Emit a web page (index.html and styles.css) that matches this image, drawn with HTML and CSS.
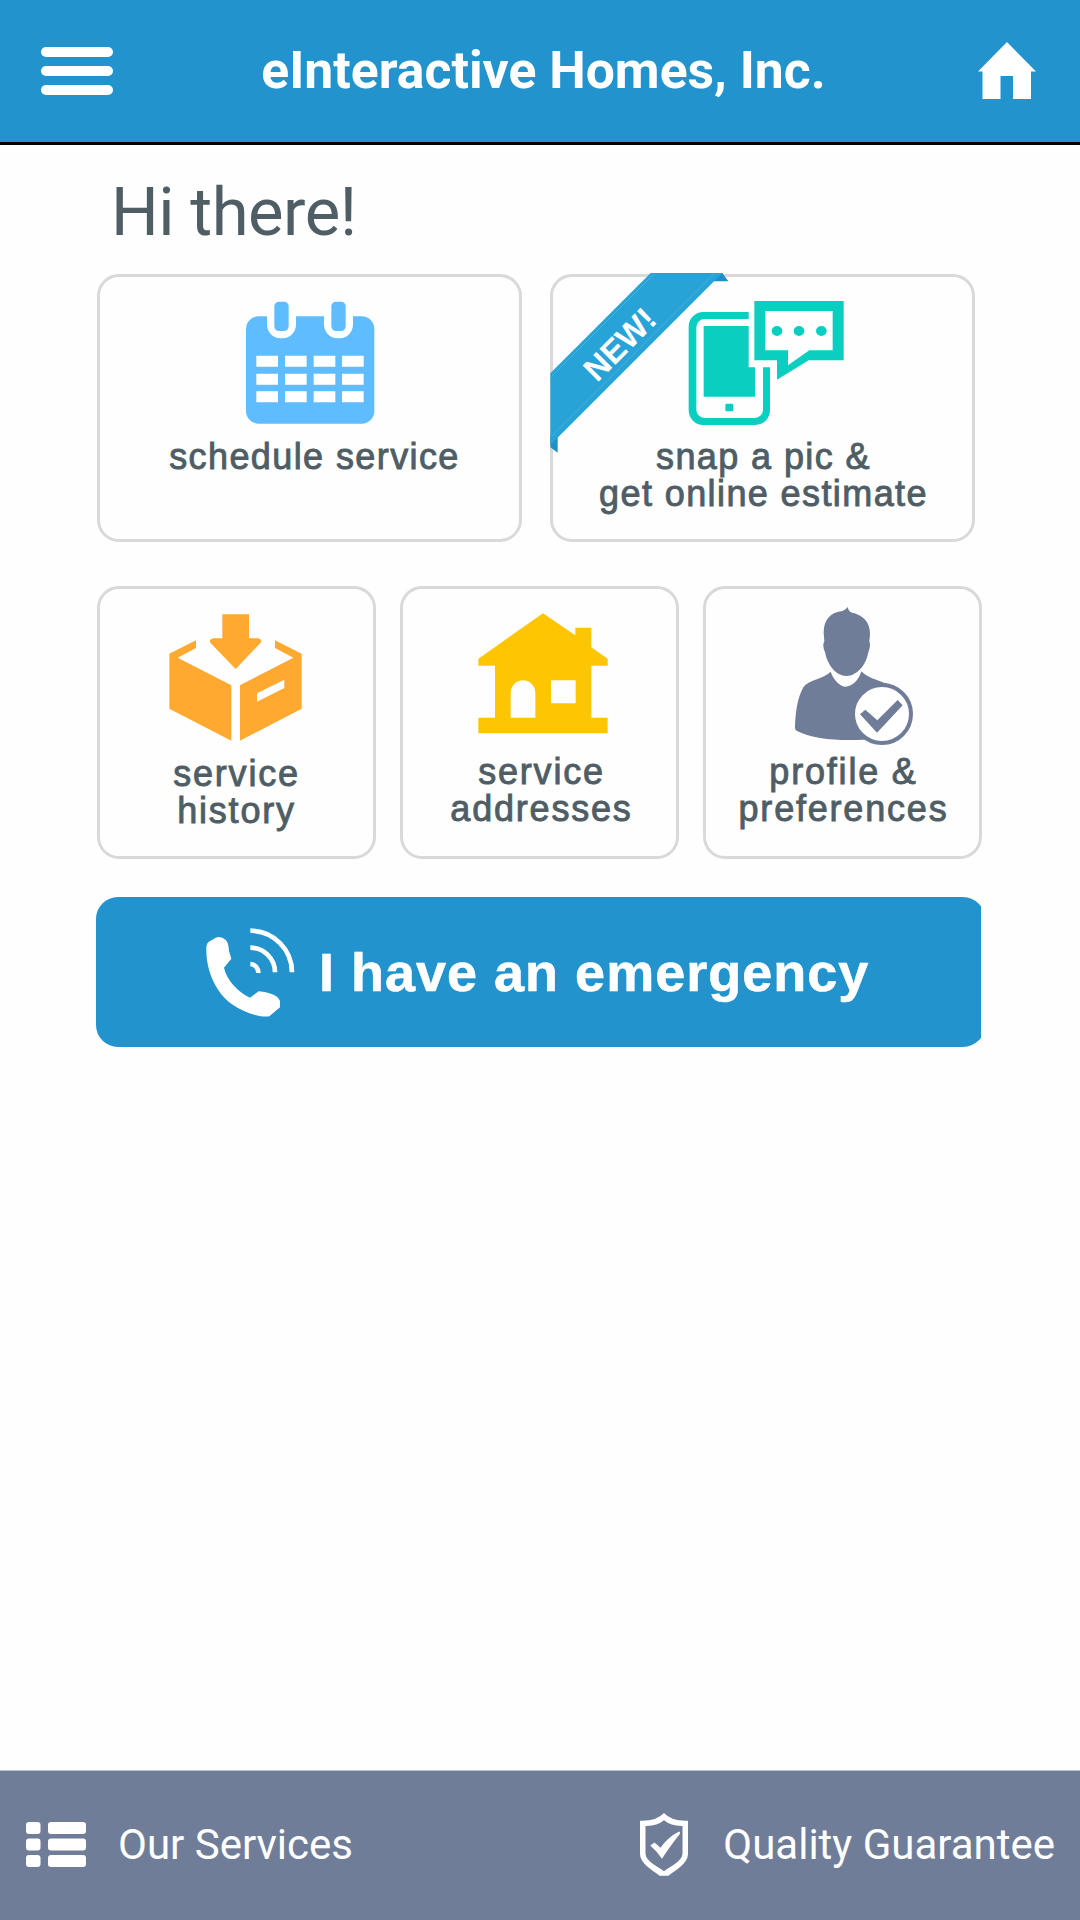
FILE: index.html
```html
<!DOCTYPE html>
<html lang="en">
<head>
    <meta charset="UTF-8" />
    <meta name="viewport" content="width=device-width, initial-scale=1.0"/>
    <title>eInteractive Homes, Inc.</title>
    <link rel="stylesheet" href="styles.css">
</head>
<body>
<div class="app">
    <header class="header">
        <div class="menu">
            <span></span>
            <span></span>
            <span></span>
        </div>
        <h1 class="title">eInteractive Homes, Inc.</h1>
        <svg class="home" viewBox="0 0 58 57" fill="#fff">
            <path d="M29 0L58 29.500H53V57H35V34H22.500V57H4.500V29.500H0Z"/>
        </svg>
    </header>

    <main class="content">
        <h2 class="greeting">Hi there!</h2>

        <div class="row row_two">
            <a class="card schedule">
                <svg class="icon_wide" viewBox="447 122 486 411">
                    <rect x="498" y="168" width="385" height="322" rx="38" fill="#5fbdff"/>
                    <path d="M561 160V192a40 42 0 0 0 40 42h7a40 42 0 0 0 40-42V160ZM732 160V192a40 42 0 0 0 40 42h7a40 42 0 0 0 40-42V160Z" fill="#fff"/>
                    <rect x="583" y="124" width="43" height="88" rx="14" fill="#5fbdff"/>
                    <rect x="754" y="124" width="43" height="88" rx="14" fill="#5fbdff"/>
                    <path d="M529 286h65v33h-65zM615 286h65v33h-65zM701 286h65v33h-65zM786 286h65v33h-65zM529 340h65v33h-65zM615 340h65v33h-65zM701 340h65v33h-65zM786 340h65v33h-65zM529 393h65v33h-65zM615 393h65v33h-65zM701 393h65v33h-65zM786 393h65v33h-65z" fill="#fff"/>
                </svg>
                <p class="label">schedule service</p>
            </a>
            <a class="card">
                <svg class="ribbon" viewBox="31 39 537 543">
                    <path d="M548 39L566 64H515V39ZM32 562L54 578V525H32Z" fill="#218ec4"/>
                    <path d="M32 340L333 39H548L32 555Z" fill="#27a3d8"/>
                    <path d="M32 353L346 39M32 532L525 39" fill="none" stroke="#58b7e0" stroke-width="2"/>
                    <text x="0" y="0" transform="translate(172 369) rotate(-45)" class="ribbon_text">NEW!</text>
                </svg>
                <svg class="icon_wide" viewBox="426 122 486 411" fill="#0acfc0">
                    <path fill-rule="evenodd" d="M490 155H626V176H494a25 25 0 0 0-25 25V448a25 25 0 0 0 25 25H644a25 25 0 0 0 25-25V321H690V450a44 44 0 0 1-44 44H490a44 44 0 0 1-44-44V199a44 44 0 0 1 44-44Z"/>
                    <path d="M491 197H626V321H645V409H491Z"/>
                    <rect x="556" y="430" width="24" height="23" rx="4"/>
                    <path fill-rule="evenodd" d="M643 122H911V300H806L711 358V300H643ZM676 152V270H744V315L808 270H878V152Z"/>
                    <ellipse cx="711" cy="212" rx="16" ry="15"/>
                    <ellipse cx="777" cy="212" rx="16" ry="15"/>
                    <ellipse cx="844" cy="212" rx="16" ry="15"/>
                </svg>
                <p class="label">snap a pic &amp;<br>get online estimate</p>
            </a>
        </div>

        <div class="row row_three">
            <a class="card history">
                <svg class="icon" viewBox="261 106 420 444" fill="#ffa931">
                    <path d="M427 134H507V206H534Q548 209 542 219L467 298L391 219Q386 209 400 206H427Z"/>
                    <path d="M268 252L348 212V235L293 264L454 347V513L268 417Z"/>
                    <path fill-rule="evenodd" d="M665 252L585 212V235L640 264L480 347V513L665 417ZM531 371L613 330V355L531 396Z"/>
                </svg>
                <p class="label">service<br>history</p>
            </a>
            <a class="card addresses">
                <svg class="icon" viewBox="239 106 420 444" fill="#fec602">
                    <path fill-rule="evenodd" d="M458 131L555 197V174H603V233L652 267V288H603V444H652V491H264V444H314V288H264V267ZM361 444H435V370a37 38 0 0 0-74 0ZM482 332V401H556V332Z"/>
                </svg>
                <p class="label">service<br>addresses</p>
            </a>
            <a class="card">
                <svg class="icon" viewBox="249 106 420 444" fill="#707d99">
                    <path d="M458 124Q468 120 473 112Q474 121 482 128Q540 140 540 194L538 215Q543 228 535 248C528 288 500 319 470 319C437 319 413 286 405 248Q396 228 403 215L401 190C401 150 421 128 458 124Z"/>
                    <path d="M422 306C430 330 450 351 467 351C487 350 506 332 514 305C534 325 560 330 586 341C620 345 600 520 520 510C440 514 370 508 321 484Q315 481 315 474C316 430 322 385 340 353C355 330 400 328 422 306Z"/>
                    <circle cx="576" cy="433" r="87" fill="#fff" stroke="#707d99" stroke-width="12"/>
                    <path d="M510 434L526 420L562 452L623 391L638 407L561 489Z"/>
                </svg>
                <p class="label">profile &amp;<br>preferences</p>
            </a>
        </div>

        <a class="emergency">
            <svg class="phone" viewBox="378 143 267 267">
                <path fill="#fff" d="M379 208Q378 190 387 184L407 172Q423 166 438 180Q446 188 447 212L454 235L432 262C440 298 472 334 510 352L536 333Q590 338 600 362V381L568 408C545 412 495 400 456 372C405 334 379 270 379 208Z"/>
                <path fill="none" stroke="#fff" stroke-width="14" d="M511 151A125 125 0 0 1 636 276M511 202A74 74 0 0 1 585 276M511 251A25 26 0 0 1 535 278"/>
            </svg>
            <span>I have an emergency</span>
        </a>
    </main>

    <footer class="footer">
        <a class="link">
            <svg class="list" viewBox="0 0 60 45" fill="#fff">
                <rect width="14.500" height="12" rx="3"/>
                <rect x="22" width="38" height="12" rx="3"/>
                <rect y="16.500" width="14.500" height="12" rx="3"/>
                <rect x="22" y="16.500" width="38" height="12" rx="3"/>
                <rect y="33" width="14.500" height="12" rx="3"/>
                <rect x="22" y="33" width="38" height="12" rx="3"/>
            </svg>
            <span>Our Services</span>
        </a>
        <a class="link">
            <svg class="shield" viewBox="287 192 140 190" preserveAspectRatio="none" fill="#fff">
                <path fill-rule="evenodd" d="M357 192Q378 217 427 215V315C427 344 394 362 370 381H344C320 362 287 344 287 315V215Q335 217 357 192ZM357 214Q336 232 303 231V315C304 338 338 352 357 368C376 352 410 338 411 315V231Q378 232 357 214Z"/>
                <path d="M317 290L329 281L347 297Q368 265 401 248Q406 250 402 257Q380 285 351 330Q336 307 317 290Z"/>
            </svg>
            <span>Quality Guarantee</span>
        </a>
    </footer>
</div>
</body>
</html>
```
FILE: styles.css
```css
* {
    margin: 0;
    padding: 0;
    box-sizing: border-box;
}
html, body {
    height: 100%;
    font-family: Roboto, sans-serif;
    background: #fefefe;
    color: #4f5d65;
}
svg {
    display: block;
    flex-shrink: 0;
}
.app {
    display: flex;
    flex-direction: column;
    height: 100%;
}
.header {
    display: flex;
    align-items: center;
    justify-content: space-between;
    height: 145px;
    padding: 0 44px 0 41px;
    background-color: #2293cd;
    border-bottom: 3px solid #000;
}
.menu {
    display: flex;
    flex-direction: column;
    gap: 9px;
    width: 72px;
}
.menu span {
    height: 10px;
    border-radius: 5px;
    background-color: #fff;
}
.title {
    padding-right: 4px;
    font-size: 51.7px;
    line-height: 60px;
    font-weight: bold;
    color: #fff;
    white-space: nowrap;
}
.home {
    width: 58px;
    height: 57px;
    margin-bottom: 2px;
}
.content {
    flex: 1;
    padding: 25px 96px 0;
}
.greeting {
    padding-left: 15px;
    font-size: 67px;
    line-height: 84px;
    font-weight: normal;
    letter-spacing: -0.5px;
}
.row {
    display: flex;
    padding-left: 1px;
}
.row_two {
    gap: 28px;
    margin-top: 20px;
}
.row_three {
    gap: 24px;
    margin-top: 44px;
}
.card {
    position: relative;
    display: flex;
    flex-direction: column;
    align-items: center;
    border: 3px solid #d9d9d9;
    border-radius: 22px;
}
.row_two .card {
    width: 425px;
    height: 268px;
    padding-top: 24px;
}
.row_three .card {
    width: 279px;
    height: 273px;
    padding-top: 16px;
}
.icon_wide {
    width: 162px;
    height: 137px;
}
.icon {
    width: 140px;
    height: 148px;
}
.label {
    padding-left: 2px;
    font-family: "Liberation Sans", Arial, sans-serif;
    font-size: 36px;
    line-height: 37px;
    letter-spacing: 1.4px;
    text-align: center;
    white-space: nowrap;
    -webkit-text-stroke: 0.9px #4f5d65;
}
.row_three .label {
    letter-spacing: 1.8px;
}
.schedule .label {
    padding-left: 10px;
}
.history .label {
    margin-top: 2px;
    padding-left: 0;
}
.addresses .label {
    padding-left: 4px;
}
.ribbon {
    position: absolute;
    top: -4px;
    left: -3px;
    width: 179px;
    height: 181px;
}
.ribbon_text {
    font-family: "Liberation Sans", Arial, sans-serif;
    font-size: 98px;
    font-weight: bold;
    fill: #fff;
}
.emergency {
    display: flex;
    align-items: center;
    gap: 24px;
    width: 889px;
    height: 150px;
    margin-top: 38px;
    padding-left: 110px;
    border-radius: 22px;
    background-color: #2293cd;
    clip-path: inset(0 4px 0 0);
    color: #fff;
    font-family: "Liberation Sans", Arial, sans-serif;
    font-size: 54px;
    font-weight: bold;
    letter-spacing: 1px;
    -webkit-text-stroke: 0.6px #fff;
}
.phone {
    width: 89px;
    height: 89px;
}
.footer {
    display: flex;
    align-items: center;
    justify-content: space-between;
    height: 150px;
    padding: 0 25px 2px 26px;
    border-top: 1px solid #b9c1cd;
    background-color: #707d99;
    color: #fff;
    font-size: 42px;
}
.link {
    display: flex;
    align-items: center;
}
.list {
    width: 60px;
    height: 45px;
    margin-right: 32px;
}
.shield {
    width: 48px;
    height: 63px;
    margin-right: 35px;
}
```
